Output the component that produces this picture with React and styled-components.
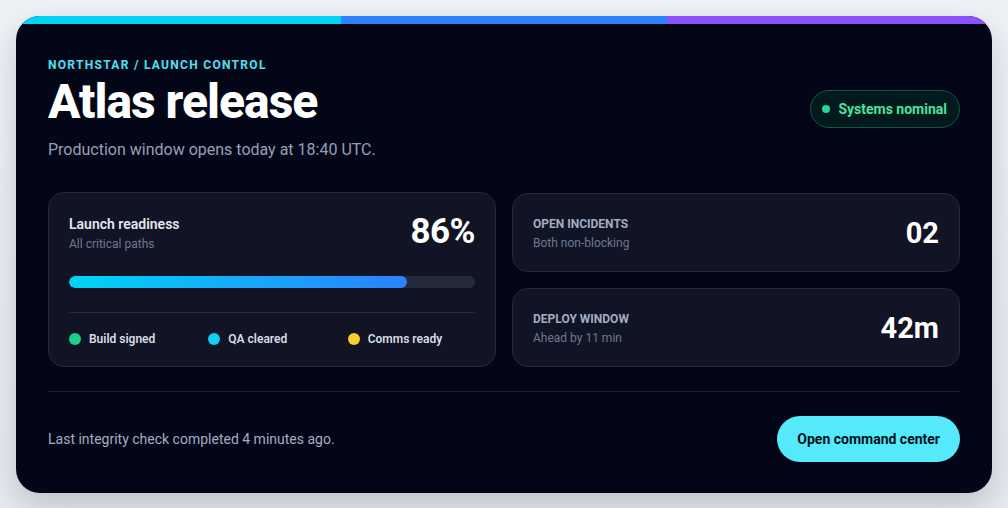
import React from "react";
import styled, { createGlobalStyle } from "styled-components";

const Global = createGlobalStyle`
  html, body { margin: 0; padding: 0; background: #eef1f6; }
  body { font-family: Roboto, "Noto Sans", "Liberation Sans", sans-serif; }
  * { box-sizing: border-box; }
`;

const Page = styled.div`
  padding: 16px;
  min-height: 508px;
  background: linear-gradient(180deg, #eef1f6 0%, #e6e9ee 100%);
`;

const Card = styled.div`
  background: #030617;
  border-radius: 24px;
  overflow: hidden;
  box-shadow: 0 12px 30px rgba(15, 23, 42, 0.18);
`;

const Stripe = styled.div`
  display: grid;
  grid-template-columns: 1fr 1fr 1fr;
  height: 8px;
`;

const Seg = styled.div`
  background: ${(p) => p.$c};
`;

const Body = styled.div`
  padding: 32px 32px 31px;
`;

const Header = styled.div`
  display: flex;
  align-items: center;
  justify-content: space-between;
`;

const Eyebrow = styled.div`
  font-size: 12px;
  font-weight: 700;
  letter-spacing: 1.3px;
  color: #4fe1f2;
  line-height: 18px;
`;

const Title = styled.h1`
  margin: 0;
  font-size: 48px;
  font-weight: 800;
  color: #ffffff;
  line-height: 56px;
  letter-spacing: -1px;
`;

const Sub = styled.p`
  margin: 8px 0 0;
  font-size: 16px;
  color: #95a0b6;
  line-height: 24px;
`;

const Badge = styled.div`
  display: flex;
  align-items: center;
  gap: 8px;
  height: 38px;
  padding: 0 12px 0 11px;
  border-radius: 999px;
  border: 1px solid #0f5a45;
  background: #021a1e;
  color: #4ee3a0;
  font-size: 14px;
  font-weight: 700;
`;

const Dot = styled.span`
  width: ${(p) => p.$s || 12}px;
  height: ${(p) => p.$s || 12}px;
  border-radius: 50%;
  background: ${(p) => p.$c};
  flex: none;
`;

const Grid = styled.div`
  display: grid;
  grid-template-columns: 1fr 1fr;
  gap: 16px;
  margin-top: 30px;
`;

const Panel = styled.div`
  background: #101424;
  border: 1px solid #252a3b;
  border-radius: 16px;
  padding: ${(p) => p.$pad || "20px"};
`;

const Row = styled.div`
  display: flex;
  justify-content: space-between;
  align-items: ${(p) => p.$align || "flex-start"};
`;

const PanelTitle = styled.div`
  font-size: 14px;
  font-weight: 600;
  color: #e3e7ef;
  line-height: 20px;
`;

const Label = styled.div`
  font-size: 12px;
  font-weight: 700;
  color: #a3adc2;
  text-transform: uppercase;
  line-height: 16px;
`;

const Hint = styled.div`
  font-size: 12px;
  color: #6e7891;
  line-height: 16px;
  margin-top: ${(p) => p.$mt || 4}px;
`;

const Big = styled.div`
  font-size: ${(p) => p.$size || 34}px;
  font-weight: 700;
  color: #ffffff;
  line-height: 1;
  letter-spacing: ${(p) => p.$ls || "0"};
`;

const Track = styled.div`
  margin-top: 24px;
  height: 12px;
  border-radius: 999px;
  background: #252a3b;
  overflow: hidden;
`;

const Fill = styled.div`
  height: 100%;
  border-radius: 999px;
  background: linear-gradient(90deg, #00d4f5, #2b82ff);
`;

const Divider = styled.div`
  height: 1px;
  background: ${(p) => p.$c || "#262b3c"};
  margin: ${(p) => p.$m || "0"};
`;

const Legend = styled.div`
  display: grid;
  grid-template-columns: repeat(3, 1fr);
  gap: 12px;
  margin-top: 19px;
`;

const LegendItem = styled.div`
  display: flex;
  align-items: center;
  gap: 8px;
  font-size: 12px;
  font-weight: 600;
  color: #d7dce6;
`;

const Stack = styled.div`
  display: flex;
  flex-direction: column;
  justify-content: center;
  gap: 16px;
`;

const Footer = styled.div`
  display: flex;
  align-items: center;
  justify-content: space-between;
`;

const FootText = styled.div`
  font-size: 14px;
  color: #a3adc2;
`;

const Button = styled.button`
  height: 46px;
  padding: 0 20px;
  border: none;
  border-radius: 999px;
  background: #55e9fc;
  color: #03101a;
  font-family: inherit;
  font-size: 14px;
  font-weight: 700;
  cursor: pointer;
`;

export default function App() {
  return (
    <>
      <Global />
      <Page>
        <Card>
          <Stripe>
            <Seg $c="#00d4f5" />
            <Seg $c="#2b82ff" />
            <Seg $c="#8c52ff" />
          </Stripe>
          <Body>
            <Header>
              <div>
                <Eyebrow>NORTHSTAR / LAUNCH CONTROL</Eyebrow>
                <Title>Atlas release</Title>
                <Sub>Production window opens today at 18:40 UTC.</Sub>
              </div>
              <Badge>
                <Dot $c="#22d79a" $s={8} />
                Systems nominal
              </Badge>
            </Header>

            <Grid>
              <Panel $pad="21px 20px 20px">
                <Row>
                  <div>
                    <PanelTitle>Launch readiness</PanelTitle>
                    <Hint $mt={2}>All critical paths</Hint>
                  </div>
                  <Big $size={35} $ls="-0.5px">86%</Big>
                </Row>
                <Track>
                  <Fill style={{ width: "83.3%" }} />
                </Track>
                <Divider $m="24px 0 0" />
                <Legend>
                  <LegendItem>
                    <Dot $c="#1ccf8a" />
                    Build signed
                  </LegendItem>
                  <LegendItem>
                    <Dot $c="#0fd0f0" />
                    QA cleared
                  </LegendItem>
                  <LegendItem>
                    <Dot $c="#fccb2c" />
                    Comms ready
                  </LegendItem>
                </Legend>
              </Panel>

              <Stack>
                <Panel $pad="22px 20px 20px">
                  <Row $align="center">
                    <div>
                      <Label>Open incidents</Label>
                      <Hint $mt={3}>Both non-blocking</Hint>
                    </div>
                    <Big $size={29}>02</Big>
                  </Row>
                </Panel>
                <Panel $pad="22px 20px 20px">
                  <Row $align="center">
                    <div>
                      <Label>Deploy window</Label>
                      <Hint $mt={3}>Ahead by 11 min</Hint>
                    </div>
                    <Big $size={29}>42m</Big>
                  </Row>
                </Panel>
              </Stack>
            </Grid>

            <Divider $c="#1a1f30" $m="24px 0 24px" />

            <Footer>
              <FootText>Last integrity check completed 4 minutes ago.</FootText>
              <Button>Open command center</Button>
            </Footer>
          </Body>
        </Card>
      </Page>
    </>
  );
}
